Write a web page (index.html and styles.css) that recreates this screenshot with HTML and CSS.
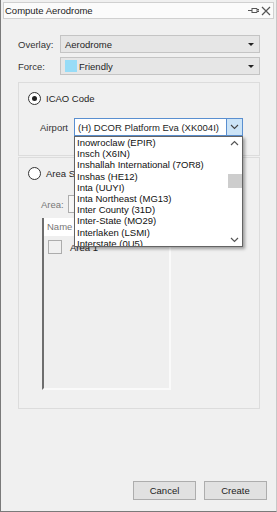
FILE: index.html
```html
<!DOCTYPE html>
<html lang="en">
<head>
    <meta charset="UTF-8">
    <meta name="viewport" content="width=device-width, initial-scale=1.0">
    <title>Compute Aerodrome</title>
    <link rel="stylesheet" href="styles.css">
</head>
<body>
    <div class="window">
        <div class="titlebar">
            <span>Compute Aerodrome</span>
            <span class="title-icons">
                <svg width="11" height="9" viewBox="0 0 11 9"><path d="M0 4.5h4M4 2v5M4 2.5h5v4H4M9 3.5h2v2H9" fill="none" stroke="#555" stroke-width="1"/></svg>
                <svg width="10" height="10" viewBox="0 0 10 10"><path d="M1 1l8 8M9 1l-8 8" stroke="#555" stroke-width="1.2"/></svg>
            </span>
        </div>

        <div class="form">
            <div class="row">
                <label class="row-label">Overlay:</label>
                <div class="select">
                    <span>Aerodrome</span>
                    <span class="caret"></span>
                </div>
            </div>
            <div class="row">
                <label class="row-label">Force:</label>
                <div class="select">
                    <span class="swatch"></span>
                    <span>Friendly</span>
                    <span class="caret"></span>
                </div>
            </div>

            <div class="group icao">
                <div class="radio-line">
                    <span class="radio checked"></span>
                    <span>ICAO Code</span>
                </div>
                <div class="airport-row">
                    <label class="airport-label">Airport</label>
                    <div class="combo">
                        <span class="combo-text">(H) DCOR Platform Eva (XK004I)</span>
                        <span class="combo-btn">
                            <svg width="9" height="6" viewBox="0 0 9 6"><path d="M1 1l3.5 3.5L8 1" fill="none" stroke="#444" stroke-width="1.1"/></svg>
                        </span>
                        <div class="dropdown">
                            <ul class="options">
                                <li>Inowroclaw (EPIR)</li>
                                <li>Insch (X6IN)</li>
                                <li>Inshallah International (7OR8)</li>
                                <li>Inshas (HE12)</li>
                                <li>Inta (UUYI)</li>
                                <li>Inta Northeast (MG13)</li>
                                <li>Inter County (31D)</li>
                                <li>Inter-State (MO29)</li>
                                <li>Interlaken (LSMI)</li>
                                <li>Interstate (0U5)</li>
                            </ul>
                            <div class="scrollbar">
                                <svg width="9" height="6" viewBox="0 0 9 6"><path d="M1 5l3.5-3.5L8 5" fill="none" stroke="#555" stroke-width="1.2"/></svg>
                                <div class="track"><div class="thumb"></div></div>
                                <svg width="9" height="6" viewBox="0 0 9 6"><path d="M1 1l3.5 3.5L8 1" fill="none" stroke="#555" stroke-width="1.2"/></svg>
                            </div>
                        </div>
                    </div>
                </div>
            </div>

            <div class="group area">
                <div class="radio-line">
                    <span class="radio"></span>
                    <span>Area Selection</span>
                </div>
                <div class="area-row">
                    <label class="area-label">Area:</label>
                    <div class="area-box"></div>
                </div>
                <div class="listbox">
                    <div class="list-head">Name</div>
                    <div class="list-item">
                        <span class="check"></span>
                        <span>Area 1</span>
                    </div>
                </div>
            </div>
        </div>

        <div class="buttons">
            <button>Cancel</button>
            <button>Create</button>
        </div>
    </div>
</body>
</html>
```

FILE: styles.css
```css
body {
    margin: 0;
    background: #f0f0f0;
    font-family: "Liberation Sans", Arial, sans-serif;
    font-size: 9.5px;
    color: #1e1e1e;
}

.window {
    width: 277px;
    height: 512px;
    box-sizing: border-box;
    border-left: 1px solid #7a7a7a;
    border-bottom: 1px solid #7a7a7a;
    border-right: 1px solid #c8c8c8;
    display: flex;
    flex-direction: column;
}

.titlebar {
    margin: 2px 2px 0 2px;
    height: 17px;
    box-sizing: border-box;
    border: 1px solid #d0d0d0;
    background: #fbfbfb;
    display: flex;
    align-items: center;
    justify-content: space-between;
    padding: 0 2px 0 1px;
    color: #222;
}

.title-icons {
    display: flex;
    align-items: center;
    gap: 2px;
}

.form {
    padding: 16px 16px 0 17px;
}

.row {
    display: flex;
    align-items: center;
    height: 18px;
    margin-bottom: 4px;
}

.row-label {
    width: 42px;
    color: #333;
}

.select {
    flex: 1;
    height: 18px;
    box-sizing: border-box;
    border: 1px solid #c4c4c4;
    background: #e6e6e6;
    display: flex;
    align-items: center;
    padding-left: 4px;
    position: relative;
}

.caret {
    position: absolute;
    right: 5px;
    top: 7px;
    border-left: 3px solid transparent;
    border-right: 3px solid transparent;
    border-top: 3px solid #222;
}

.swatch {
    width: 12px;
    height: 12px;
    background: #97dcf7;
    margin-right: 2px;
}

.group {
    border: 1px solid #dcdcdc;
    box-sizing: border-box;
    margin-top: 7px;
}

.icao {
    height: 74px;
    padding: 8px 0 0 9px;
}

.area {
    height: 252px;
    margin-top: 1px;
    padding: 8px 0 0 9px;
}

.radio-line {
    display: flex;
    align-items: center;
    gap: 5px;
    height: 14px;
}

.radio {
    width: 11px;
    height: 11px;
    border: 1px solid #333;
    border-radius: 50%;
    background: #fff;
    position: relative;
}

.radio.checked::after {
    content: "";
    position: absolute;
    left: 3px;
    top: 3px;
    width: 5px;
    height: 5px;
    border-radius: 50%;
    background: #222;
}

.airport-row {
    display: flex;
    align-items: center;
    margin-top: 13px;
    padding-left: 12px;
}

.airport-label {
    width: 34px;
    color: #333;
}

.combo {
    width: 169px;
    height: 18px;
    box-sizing: border-box;
    border: 1px solid #5a8fd0;
    background: #fff;
    display: flex;
    align-items: center;
    position: relative;
}

.combo-text {
    flex: 1;
    padding-left: 3px;
    white-space: nowrap;
    overflow: hidden;
}

.combo-btn {
    width: 15px;
    height: 16px;
    background: #cce4f7;
    border-left: 1px solid #5a8fd0;
    display: flex;
    align-items: center;
    justify-content: center;
}

.dropdown {
    position: absolute;
    left: -1px;
    top: 17px;
    width: 169px;
    height: 111px;
    box-sizing: border-box;
    border: 1px solid #646464;
    background: #fff;
    box-shadow: 2px 2px 3px rgba(0, 0, 0, 0.35);
    display: flex;
    z-index: 5;
}

.options {
    list-style: none;
    margin: 0;
    padding: 0 0 0 2px;
    flex: 1;
    overflow: hidden;
}

.options li {
    height: 11.2px;
    line-height: 11px;
    white-space: nowrap;
    color: #111;
}

.scrollbar {
    width: 15px;
    background: #fff;
    display: flex;
    flex-direction: column;
    align-items: center;
    padding: 3px 0;
    box-sizing: border-box;
}

.track {
    flex: 1;
    width: 15px;
    position: relative;
}

.thumb {
    position: absolute;
    left: 1px;
    right: 0;
    top: 28px;
    height: 14px;
    background: #cdcdcd;
}

.area-row {
    display: flex;
    align-items: center;
    margin-top: 15px;
    padding-left: 13px;
}

.area-label {
    width: 27px;
    color: #777;
}

.area-box {
    width: 175px;
    height: 18px;
    box-sizing: border-box;
    border: 1px solid #adadad;
    background: #f7f7f7;
}

.listbox {
    margin: 5px 0 0 14px;
    width: 129px;
    height: 172px;
    box-sizing: border-box;
    border-left: 2px solid #6e6e6e;
    border-right: 2px solid #fafafa;
    border-bottom: 2px solid #fafafa;
    background: #efefef;
}

.list-head {
    height: 18px;
    background: #fff;
    color: #777;
    line-height: 18px;
    padding-left: 3px;
}

.list-item {
    display: flex;
    align-items: center;
    gap: 8px;
    padding: 4px 0 0 4px;
}

.check {
    width: 12px;
    height: 12px;
    border: 1px solid #acacac;
    background: #f0f0f0;
}

.buttons {
    margin-top: auto;
    display: flex;
    justify-content: flex-end;
    gap: 8px;
    padding: 0 9px 11px 0;
}

button {
    width: 63px;
    height: 19px;
    border: 1px solid #adadad;
    background: #e1e1e1;
    font-family: inherit;
    font-size: 9.5px;
    color: #222;
    padding: 0;
}
```
